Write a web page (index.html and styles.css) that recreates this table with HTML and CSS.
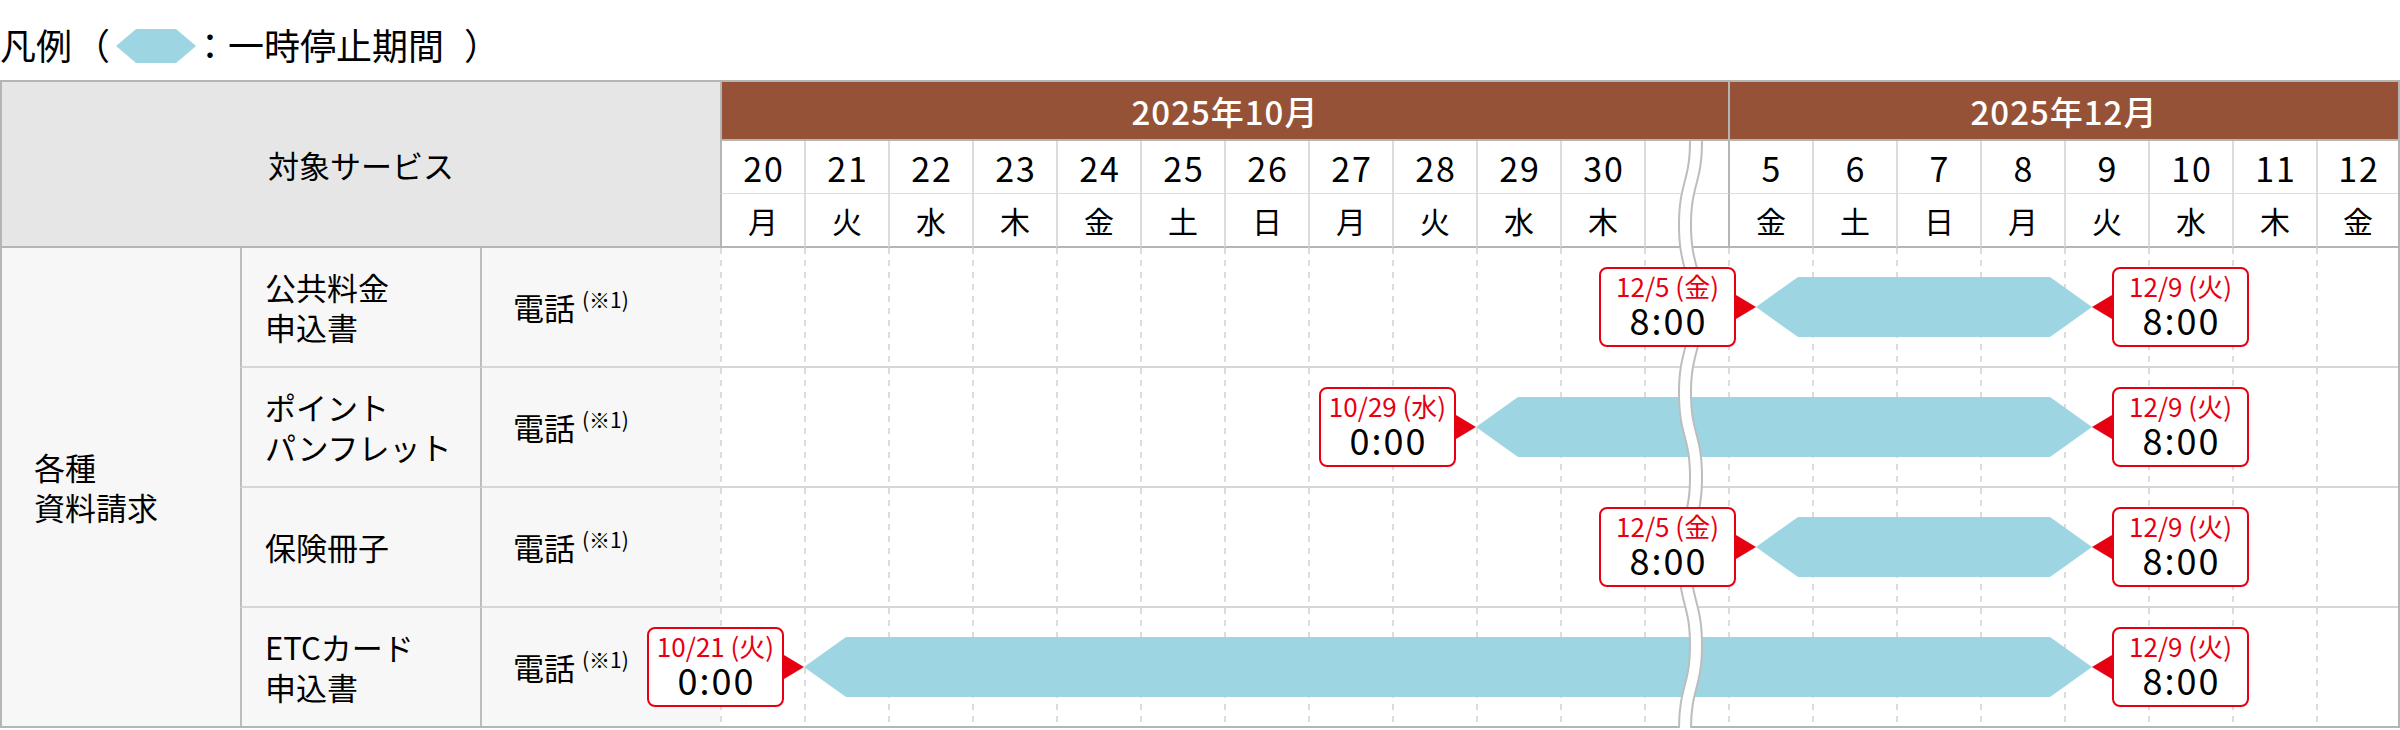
FILE: index.html
```html
<!DOCTYPE html>
<html lang="ja">
<head>
    <meta charset="UTF-8">
    <meta name="viewport" content="width=device-width, initial-scale=1.0">
    <title>一時停止期間</title>
    <link rel="stylesheet" href="styles.css">
</head>
<body>
    <div class="legend">凡例<span class="paren-open">（</span><span class="legend-bar"></span>：一時停止期間<span class="paren-close">）</span></div>

    <div class="chart">
        <div class="head-service">対象サービス</div>
        <div class="month month-oct">2025年10月</div>
        <div class="month month-dec">2025年12月</div>

        <!-- dates -->
        <div class="date first">20</div>
        <div class="date">21</div>
        <div class="date">22</div>
        <div class="date">23</div>
        <div class="date">24</div>
        <div class="date">25</div>
        <div class="date">26</div>
        <div class="date">27</div>
        <div class="date">28</div>
        <div class="date">29</div>
        <div class="date">30</div>
        <div class="date"></div>
        <div class="date dec-start">5</div>
        <div class="date">6</div>
        <div class="date">7</div>
        <div class="date">8</div>
        <div class="date">9</div>
        <div class="date">10</div>
        <div class="date">11</div>
        <div class="date">12</div>

        <!-- weekdays -->
        <div class="wday first">月</div>
        <div class="wday">火</div>
        <div class="wday">水</div>
        <div class="wday">木</div>
        <div class="wday">金</div>
        <div class="wday">土</div>
        <div class="wday">日</div>
        <div class="wday">月</div>
        <div class="wday">火</div>
        <div class="wday">水</div>
        <div class="wday">木</div>
        <div class="wday"></div>
        <div class="wday dec-start">金</div>
        <div class="wday">土</div>
        <div class="wday">日</div>
        <div class="wday">月</div>
        <div class="wday">火</div>
        <div class="wday">水</div>
        <div class="wday">木</div>
        <div class="wday">金</div>

        <div class="group">各種<br>資料請求</div>

        <!-- row 1 -->
        <div class="name">公共料金<br>申込書</div>
        <div class="tel"><span>電話<sup class="note">(※1)</sup></span></div>
        <div class="track">
            <div class="slot"></div><div class="slot"></div><div class="slot"></div><div class="slot"></div><div class="slot"></div>
            <div class="slot"></div><div class="slot"></div><div class="slot"></div><div class="slot"></div><div class="slot"></div>
            <div class="slot"></div><div class="slot"></div><div class="slot"></div><div class="slot"></div><div class="slot"></div>
            <div class="slot"></div><div class="slot"></div><div class="slot"></div><div class="slot"></div><div class="slot"></div>
            <div class="tag start" style="left: 879px;"><div class="tag-date">12/5 (金)</div><div class="tag-time">8:00</div></div>
            <div class="bar" style="left: 1036px; width: 336px;"></div>
            <div class="tag end" style="left: 1392px;"><div class="tag-date">12/9 (火)</div><div class="tag-time">8:00</div></div>
        </div>

        <!-- row 2 -->
        <div class="name">ポイント<br>パンフレット</div>
        <div class="tel"><span>電話<sup class="note">(※1)</sup></span></div>
        <div class="track">
            <div class="slot"></div><div class="slot"></div><div class="slot"></div><div class="slot"></div><div class="slot"></div>
            <div class="slot"></div><div class="slot"></div><div class="slot"></div><div class="slot"></div><div class="slot"></div>
            <div class="slot"></div><div class="slot"></div><div class="slot"></div><div class="slot"></div><div class="slot"></div>
            <div class="slot"></div><div class="slot"></div><div class="slot"></div><div class="slot"></div><div class="slot"></div>
            <div class="tag start" style="left: 599px;"><div class="tag-date">10/29 (水)</div><div class="tag-time">0:00</div></div>
            <div class="bar" style="left: 756px; width: 616px;"></div>
            <div class="tag end" style="left: 1392px;"><div class="tag-date">12/9 (火)</div><div class="tag-time">8:00</div></div>
        </div>

        <!-- row 3 -->
        <div class="name">保険冊子</div>
        <div class="tel"><span>電話<sup class="note">(※1)</sup></span></div>
        <div class="track">
            <div class="slot"></div><div class="slot"></div><div class="slot"></div><div class="slot"></div><div class="slot"></div>
            <div class="slot"></div><div class="slot"></div><div class="slot"></div><div class="slot"></div><div class="slot"></div>
            <div class="slot"></div><div class="slot"></div><div class="slot"></div><div class="slot"></div><div class="slot"></div>
            <div class="slot"></div><div class="slot"></div><div class="slot"></div><div class="slot"></div><div class="slot"></div>
            <div class="tag start" style="left: 879px;"><div class="tag-date">12/5 (金)</div><div class="tag-time">8:00</div></div>
            <div class="bar" style="left: 1036px; width: 336px;"></div>
            <div class="tag end" style="left: 1392px;"><div class="tag-date">12/9 (火)</div><div class="tag-time">8:00</div></div>
        </div>

        <!-- row 4 -->
        <div class="name last">ETCカード<br>申込書</div>
        <div class="tel last"><span>電話<sup class="note">(※1)</sup></span></div>
        <div class="track last">
            <div class="slot"></div><div class="slot"></div><div class="slot"></div><div class="slot"></div><div class="slot"></div>
            <div class="slot"></div><div class="slot"></div><div class="slot"></div><div class="slot"></div><div class="slot"></div>
            <div class="slot"></div><div class="slot"></div><div class="slot"></div><div class="slot"></div><div class="slot"></div>
            <div class="slot"></div><div class="slot"></div><div class="slot"></div><div class="slot"></div><div class="slot"></div>
            <div class="tag start" style="left: -73px;"><div class="tag-date">10/21 (火)</div><div class="tag-time">0:00</div></div>
            <div class="bar" style="left: 84px; width: 1288px;"></div>
            <div class="tag end" style="left: 1392px;"><div class="tag-date">12/9 (火)</div><div class="tag-time">8:00</div></div>
        </div>

        <!-- break mark between Oct and Dec -->
        <svg class="wave" width="30" height="592" viewBox="0 0 30 592">
            <path d="M20 0 C20 42 9 42 9 84 S20 126 20 168 S9 210 9 252 S20 294 20 336 S9 378 9 420 S20 462 20 504 S9 546 9 588" fill="none" stroke="#bdbdbd" stroke-width="14"/>
            <path d="M20 0 C20 42 9 42 9 84 S20 126 20 168 S9 210 9 252 S20 294 20 336 S9 378 9 420 S20 462 20 504 S9 546 9 588" fill="none" stroke="#ffffff" stroke-width="10"/>
        </svg>
    </div>
</body>
</html>
```

FILE: styles.css
```css
body {
    margin: 0;
    font-family: "Noto Sans CJK JP", "Noto Sans", sans-serif;
    color: #000;
    background-color: #fff;
}
.legend {
    display: flex;
    align-items: center;
    height: 80px;
    padding-top: 8px;
    box-sizing: border-box;
    font-size: 36px;
    line-height: 40px;
}
.paren-open {
    margin-left: 2px;
}
.paren-close {
    margin-left: 20px;
}
.legend-bar {
    display: inline-block;
    width: 80px;
    height: 34px;
    margin: 4px -4px 0 6px;
    background-color: #9dd5e2;
    clip-path: polygon(0 50%, 20px 0, calc(100% - 20px) 0, 100% 50%, calc(100% - 20px) 100%, 20px 100%);
}
.chart {
    position: relative;
    display: grid;
    grid-template-columns: 238px 240px 240px repeat(19, 84px) 1fr;
    grid-template-rows: 59px 53px 54px 120px 120px 120px 118px;
    width: 2400px;
    box-sizing: border-box;
    border: 2px solid #b5b5b5;
}
.chart > div {
    box-sizing: border-box;
}
.head-service {
    grid-column: 1 / 4;
    grid-row: 1 / 4;
    display: flex;
    align-items: center;
    justify-content: center;
    background-color: #e6e6e6;
    border-bottom: 2px solid #b5b5b5;
    font-size: 31px;
}
.month {
    display: flex;
    align-items: center;
    justify-content: center;
    background-color: #965237;
    color: #fff;
    border-left: 2px solid #b5b5b5;
    border-bottom: 2px solid #b5b5b5;
    font-size: 33px;
    font-weight: 500;
    letter-spacing: 1px;
}
.month-oct {
    grid-column: span 12;
}
.month-dec {
    grid-column: span 8;
}
.date, .wday {
    display: flex;
    align-items: center;
    justify-content: center;
    border-left: 2px solid #dcdcdc;
}
.date {
    border-bottom: 1px solid #dcdcdc;
    font-size: 34px;
    letter-spacing: 2px;
    padding-left: 2px;
}
.wday {
    border-bottom: 2px solid #b5b5b5;
    font-size: 30px;
}
.date.first, .wday.first, .date.dec-start, .wday.dec-start {
    border-left-color: #b5b5b5;
}
.group {
    grid-column: 1;
    grid-row: 4 / 8;
    display: flex;
    align-items: center;
    padding-left: 32px;
    background-color: #f7f7f7;
    font-size: 31px;
    line-height: 40px;
}
.name, .tel {
    display: flex;
    align-items: center;
    background-color: #f7f7f7;
    border-left: 2px solid #bdbdbd;
    border-bottom: 2px solid #d6d6d6;
    font-size: 31px;
    line-height: 40px;
}
.name {
    padding-left: 23px;
}
.tel {
    padding-left: 31px;
}
.note {
    font-size: 21px;
    line-height: 24px;
    vertical-align: top;
    margin-left: 7px;
}
.track {
    grid-column: span 20;
    position: relative;
    display: grid;
    grid-template-columns: repeat(19, 84px) 1fr;
    border-bottom: 2px solid #d6d6d6;
}
.last {
    border-bottom: none;
}
.slot {
    background-image: linear-gradient(to bottom, #dcdcdc 50%, transparent 50%);
    background-size: 2px 12px;
    background-repeat: repeat-y;
}
.bar {
    position: absolute;
    top: 29px;
    height: 60px;
    background-color: #9dd5e2;
    clip-path: polygon(0 50%, 42px 0, calc(100% - 42px) 0, 100% 50%, calc(100% - 42px) 100%, 42px 100%);
    z-index: 1;
}
.wave {
    position: absolute;
    left: 1674px;
    top: 59px;
    z-index: 2;
}
.tag {
    position: absolute;
    top: 19px;
    width: 137px;
    height: 80px;
    box-sizing: border-box;
    padding-top: 3px;
    border: 2px solid #e60012;
    border-radius: 8px;
    background-color: #fff;
    text-align: center;
    z-index: 3;
}
.tag-date {
    color: #e60012;
    font-size: 26px;
    line-height: 28px;
}
.tag-time {
    font-size: 36px;
    line-height: 38px;
    letter-spacing: 2px;
    padding-left: 2px;
}
.tag.end::before, .tag.start::after {
    content: "";
    position: absolute;
    top: calc(50% - 12px);
    border-top: 12px solid transparent;
    border-bottom: 12px solid transparent;
}
.tag.end::before {
    left: -22px;
    border-right: 20px solid #e60012;
}
.tag.start::after {
    right: -22px;
    border-left: 20px solid #e60012;
}
```
